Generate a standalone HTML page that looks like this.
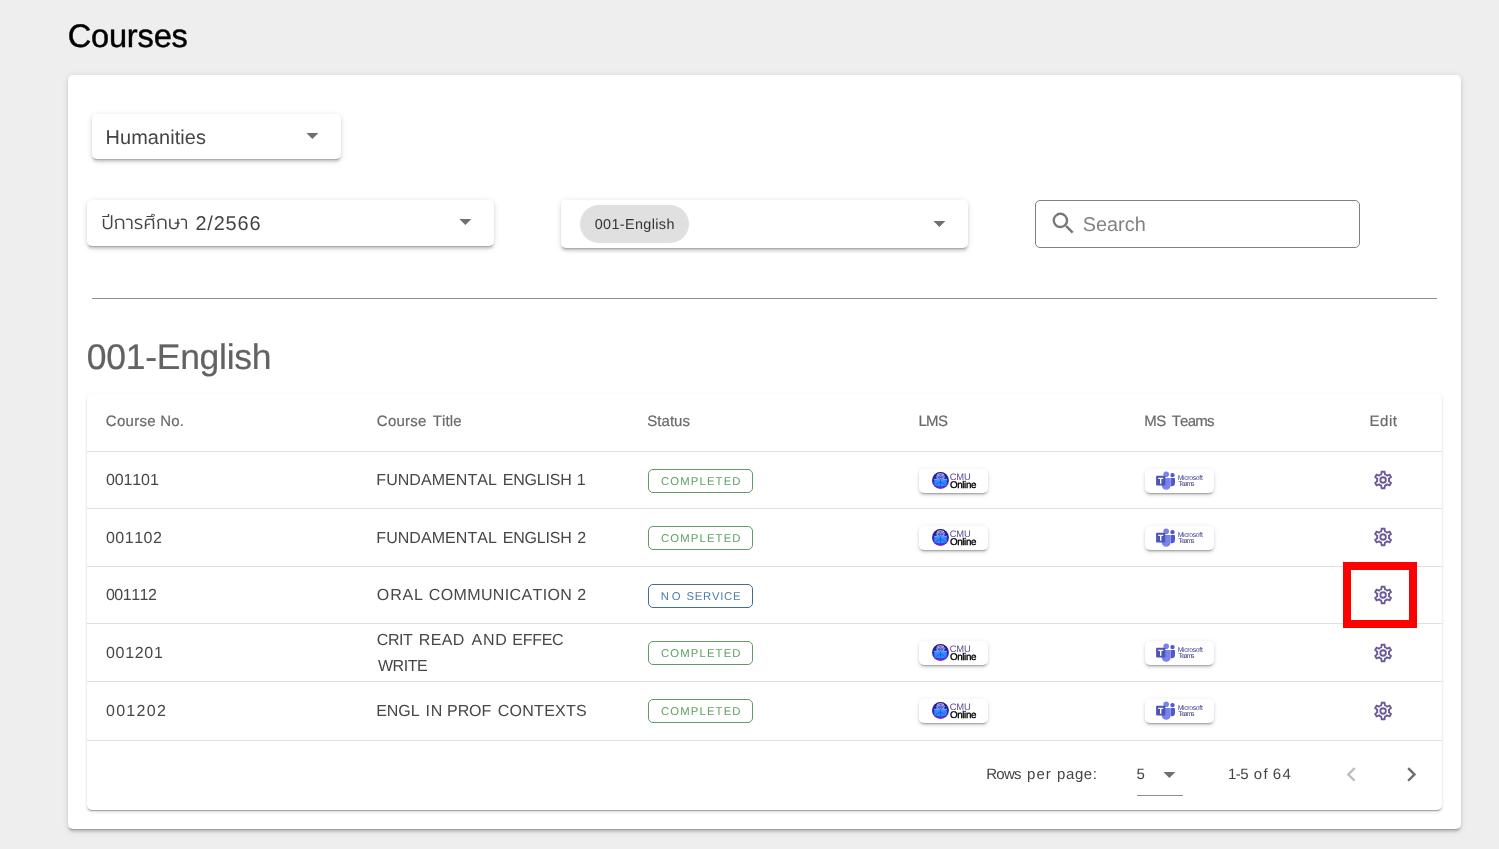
<!DOCTYPE html>
<html lang="en">
<head>
<meta charset="utf-8">
<title>Courses</title>
<style>
*{box-sizing:border-box;margin:0;padding:0}
html,body{width:1499px;height:849px;overflow:hidden;background:#eeeeee}
body{font-family:"Liberation Sans",sans-serif;position:relative}
#app{position:absolute;left:0;top:0;width:1499px;height:849px;will-change:transform}
.b,.t,svg{position:absolute;display:block}
.t{white-space:nowrap;font-kerning:none;font-weight:400;text-rendering:geometricPrecision}
.w span{position:absolute;top:0;display:block}
.card{left:68px;top:75px;width:1393px;height:754px;background:#fff;border-radius:5px;box-shadow:0 3.2px 1.2px -2.4px rgba(0,0,0,.18),0 2.2px 2.4px 0 rgba(0,0,0,.13),0 1.2px 6px 0 rgba(0,0,0,.12)}
.sel{background:#fff;border-radius:5px;box-shadow:0 3.2px 1.2px -2.4px rgba(0,0,0,.18),0 2.2px 2.4px 0 rgba(0,0,0,.13),0 1.2px 6px 0 rgba(0,0,0,.12)}
.thai{font-family:"Liberation Sans","Prompt","Noto Sans Thai","Sarabun","Kanit","IBM Plex Sans Thai",sans-serif;font-weight:300}
.chip{background:#e0e0e0;border-radius:19.2px}
.search{border:1px solid #808080;border-radius:5px;background:#fff}
.tbl{left:87px;top:394px;width:1355px;height:416px;background:#fff;border-radius:5px;box-shadow:0 1.9px 1.2px -1.2px rgba(0,0,0,.2),0 1px 1.2px 0 rgba(0,0,0,.13),0 1.2px 3.6px 0 rgba(0,0,0,.12)}
.ln{left:87px;width:1355px;height:1px;background:#e0e0e0}
.st{width:105px;height:24px;border:1px solid #639a67;border-radius:5px}
.st.ns{border-color:#3f6d96}
.btn{width:69px;height:24px;background:#fff;border-radius:5px;box-shadow:0 2.7px 1.2px -2.1px rgba(0,0,0,.2),0 2px 2.4px 0 rgba(0,0,0,.12),0 1.2px 5.5px 0 rgba(0,0,0,.11)}
.red{left:1343px;top:562px;width:74px;height:66px;border:8px solid #ff0000}
</style>
</head>
<body>
<main id="app">
<svg width="0" height="0" style="left:-10px;top:-10px" aria-hidden="true"><defs><linearGradient id="cg" x1="0" y1="0" x2="0" y2="1"><stop offset="0" stop-color="#15157a"/><stop offset=".45" stop-color="#2a22b4"/><stop offset="1" stop-color="#6a2cd2"/></linearGradient></defs></svg>
<h1 class="t " style="left:67.64px;top:15px;font-size:32.6px;line-height:42px;letter-spacing:-0.176px;color:#000;-webkit-text-stroke:.45px #000;">Courses</h1>
<section aria-label="Courses">
<div class="b card"></div>
<div class="filters">
<div class="b sel" style="left:92px;top:114px;width:249px;height:45px"></div>
<div class="t " style="left:105.57px;top:125px;font-size:19.9px;line-height:26px;letter-spacing:0.101px;color:#444;">Humanities</div>
<svg style="left:297.60px;top:120.50px" width="28.8" height="28.8" viewBox="0 0 24 24"><path fill="#707070" d="M7,10L12,15L17,10H7Z"/></svg>
<div class="b sel" style="left:87px;top:200px;width:407px;height:46px"></div>
<div class="t thai" style="left:101.4px;top:208px;width:170px;height:32px;font-size:19.2px;line-height:32px;color:#444">ปีการศึกษา <span style="position:absolute;left:94px;top:0;font-size:19.9px;letter-spacing:.85px">2/2566</span></div>
<svg style="left:451.00px;top:206.50px" width="28.8" height="28.8" viewBox="0 0 24 24"><path fill="#707070" d="M7,10L12,15L17,10H7Z"/></svg>
<div class="b sel" style="left:561px;top:200px;width:407px;height:48px"></div>
<div class="b chip" style="left:580px;top:205px;width:109px;height:38px"></div>
<div class="t " style="left:594.74px;top:216px;font-size:14.4px;line-height:19px;letter-spacing:0.365px;color:#333;">001-English</div>
<svg style="left:925.00px;top:208.60px" width="28.8" height="28.8" viewBox="0 0 24 24"><path fill="#707070" d="M7,10L12,15L17,10H7Z"/></svg>
<div class="b search" style="left:1035px;top:200px;width:325px;height:48px"></div>
<svg style="left:1049.2px;top:209.0px" width="28.8" height="28.8" viewBox="0 0 24 24"><path fill="#777" d="M9.5,3A6.5,6.5 0 0,1 16,9.5C16,11.11 15.41,12.59 14.44,13.73L14.71,14H15.5L20.5,19L19,20.5L14,15.5V14.71L13.73,14.44C12.59,15.41 11.11,16 9.5,16A6.5,6.5 0 0,1 3,9.5A6.5,6.5 0 0,1 9.5,3M9.5,5C7,5 5,7 5,9.5C5,12 7,14 9.5,14C12,14 14,12 14,9.5C14,7 12,5 9.5,5Z"/></svg>
<div class="t " style="left:1082.70px;top:212px;font-size:19.9px;line-height:26px;letter-spacing:0.009px;color:#828282;">Search</div>
</div>
<div class="b" role="separator" style="left:92px;top:298px;width:1345px;height:1px;background:#8f8f8f"></div>
<h2 class="t " style="left:86.81px;top:334px;font-size:35.5px;line-height:46px;letter-spacing:-0.279px;color:#626262;-webkit-text-stroke:.2px #626262;">001-English</h2>
<div role="table" aria-label="001-English">
<div class="b tbl"></div>
<div role="row">
<div class="t w " style="left:106.60px;top:412px;width:80.0px;height:20px;font-size:15px;line-height:20px;color:#6a6a6a;-webkit-text-stroke:.2px #6a6a6a;"><span style="left:-0.76px;letter-spacing:0.295px">Course</span> <span style="left:53.77px;letter-spacing:0.129px">No.</span></div>
<div class="t w " style="left:377.60px;top:412px;width:87.4px;height:20px;font-size:15px;line-height:20px;color:#6a6a6a;-webkit-text-stroke:.2px #6a6a6a;"><span style="left:-0.76px;letter-spacing:0.215px">Course</span> <span style="left:55.06px;letter-spacing:0.167px">Title</span></div>
<div class="t w " style="left:648.00px;top:412px;width:45.4px;height:20px;font-size:15px;line-height:20px;color:#6a6a6a;-webkit-text-stroke:.2px #6a6a6a;"><span style="left:-0.68px;letter-spacing:0.020px">Status</span></div>
<div class="t w " style="left:919.60px;top:412px;width:31.6px;height:20px;font-size:15px;line-height:20px;color:#6a6a6a;-webkit-text-stroke:.2px #6a6a6a;"><span style="left:-1.23px;letter-spacing:-0.662px">LMS</span></div>
<div class="t w " style="left:1145.40px;top:412px;width:72.5px;height:20px;font-size:15px;line-height:20px;color:#6a6a6a;-webkit-text-stroke:.2px #6a6a6a;"><span style="left:-1.23px;letter-spacing:-0.381px">MS</span> <span style="left:26.36px;letter-spacing:-0.791px">Teams</span></div>
<div class="t w " style="left:1370.70px;top:412px;width:30.1px;height:20px;font-size:15px;line-height:20px;color:#6a6a6a;-webkit-text-stroke:.2px #6a6a6a;"><span style="left:-1.23px;letter-spacing:0.531px">Edit</span></div>
</div>
<div class="b ln" style="top:451px"></div>
<div class="b ln" style="top:508px"></div>
<div class="b ln" style="top:566px"></div>
<div class="b ln" style="top:623px"></div>
<div class="b ln" style="top:681px"></div>
<div class="b ln" style="top:740px"></div>
<div role="row">
<div class="t " style="left:105.97px;top:470px;font-size:16px;line-height:21px;letter-spacing:-0.117px;color:#474747;">001101</div>
<div class="t w " style="left:377.60px;top:470px;width:210.8px;height:21px;font-size:16px;line-height:21px;color:#474747;"><span style="left:-1.31px;letter-spacing:0.064px">FUNDAMENTAL</span> <span style="left:125.09px;letter-spacing:-0.171px">ENGLISH</span> <span style="left:199.18px;letter-spacing:0.000px">1</span></div>
<div class="b st" style="left:648px;top:469px"></div>
<div class="t " style="left:661.03px;top:475px;font-size:11.3px;line-height:15px;letter-spacing:1.149px;color:#5fa263;">COMPLETED</div>
<div class="b btn" style="left:919px;top:469px"></div>
<svg style="left:932px;top:471.8px" width="17" height="17" viewBox="0 0 17 17"><circle cx="8.5" cy="8.5" r="8.5" fill="url(#cg)"/><path d="M5.4 2.3 Q8.5 1 11.6 2.3" fill="none" stroke="#eef0ff" stroke-width=".9" stroke-linecap="round"/><path d="M4.2 4.1 Q8.5 1.9 12.8 4.1" fill="none" stroke="#a9adff" stroke-width="1" stroke-linecap="round"/><path d="M4.4 4.6 Q8.5 3.6 12.6 4.6 L12.4 6.9 L8.5 7.6 L4.6 6.9 Z" fill="#8f95f5"/><circle cx="7.3" cy="5.5" r=".75" fill="none" stroke="#1c1c84" stroke-width=".55"/><circle cx="9.7" cy="5.5" r=".75" fill="none" stroke="#1c1c84" stroke-width=".55"/><path d="M2.2 6.8 L8.5 7.7 L14.8 6.8 L14.6 13.6 L8.5 14.6 L2.4 13.6 Z" fill="#2b8dff"/><path d="M2.2 6.8 L8.5 7.7 L14.8 6.8 L14.8 7.7 L8.5 8.6 L2.2 7.7 Z" fill="#6fb4ff"/><path d="M8.5 7.7 V14.6 M3.4 13 L8.5 9.6 L13.6 13" stroke="#1a52e6" stroke-width=".8" fill="none"/></svg>
<div class="t " style="left:949.72px;top:471px;font-size:9.4px;line-height:12px;letter-spacing:-0.202px;color:#5a4a92;">CMU</div>
<div class="t " style="left:949.94px;top:480px;font-size:9.8px;line-height:12px;letter-spacing:-0.366px;color:#000;-webkit-text-stroke:.35px #000;">Online</div>
<div class="b btn" style="left:1144.5px;top:469px"></div>
<svg style="left:1156px;top:471.0px" width="19" height="19" viewBox="0 0 19 19"><circle cx="16.5" cy="4.1" r="2.2" fill="#4f58c4"/><path d="M14.7 6.9h3.6a.7.7 0 0 1 .7.7v4.2a3.5 3.5 0 0 1-3.5 3.5h-.8z" fill="#5059c9"/><circle cx="10.2" cy="3.2" r="2.8" fill="#7b83eb"/><path d="M6.4 7.1h7.6a.7.7 0 0 1 .7.7v6.4a4.5 4.5 0 0 1-4.5 4.5a4.5 4.5 0 0 1-4.5-4.5V7.8a.7.7 0 0 1 .7-.7z" fill="#7b83eb"/><rect x=".1" y="4.8" width="9.2" height="9.7" rx=".8" fill="#4b53bc"/><path d="M2.2 6.7h5v1.4H5.4v4.6H4V8.1H2.2z" fill="#fff"/></svg>
<div class="t " style="left:1177.63px;top:474px;font-size:6.9px;line-height:9px;letter-spacing:-0.346px;color:#3f4296;">Microsoft</div>
<div class="t " style="left:1178.15px;top:480px;font-size:6.9px;line-height:9px;letter-spacing:-1.171px;color:#41447f;">Teams</div>
<svg style="left:1372.20px;top:468.70px" width="22.2" height="22" viewBox="0 0 24 24" preserveAspectRatio="none"><path fill="#695a98" d="M12,8A4,4 0 0,1 16,12A4,4 0 0,1 12,16A4,4 0 0,1 8,12A4,4 0 0,1 12,8M12,10A2,2 0 0,0 10,12A2,2 0 0,0 12,14A2,2 0 0,0 14,12A2,2 0 0,0 12,10M10,22C9.75,22 9.54,21.82 9.5,21.58L9.13,18.93C8.5,18.68 7.96,18.34 7.44,17.94L4.95,18.95C4.73,19.03 4.46,18.95 4.34,18.73L2.34,15.27C2.21,15.05 2.27,14.78 2.46,14.63L4.57,12.97L4.5,12L4.57,11L2.46,9.37C2.27,9.22 2.21,8.95 2.34,8.73L4.34,5.27C4.46,5.05 4.73,4.96 4.95,5.05L7.44,6.05C7.96,5.66 8.5,5.32 9.13,5.07L9.5,2.42C9.54,2.18 9.75,2 10,2H14C14.25,2 14.46,2.18 14.5,2.42L14.87,5.07C15.5,5.32 16.04,5.66 16.56,6.05L19.05,5.05C19.27,4.96 19.54,5.05 19.66,5.27L21.66,8.73C21.79,8.95 21.73,9.22 21.54,9.37L19.43,11L19.5,12L19.43,13L21.54,14.63C21.73,14.78 21.79,15.05 21.66,15.27L19.66,18.73C19.54,18.95 19.27,19.04 19.05,18.95L16.56,17.95C16.04,18.34 15.5,18.68 14.87,18.93L14.5,21.58C14.46,21.82 14.25,22 14,22H10M11.25,4L10.88,6.61C9.68,6.86 8.62,7.5 7.85,8.39L5.44,7.35L4.69,8.65L6.8,10.2C6.4,11.37 6.4,12.64 6.8,13.8L4.68,15.36L5.43,16.66L7.86,15.62C8.63,16.5 9.68,17.14 10.87,17.38L11.24,20H12.76L13.13,17.39C14.32,17.14 15.37,16.5 16.14,15.62L18.57,16.66L19.32,15.36L17.2,13.81C17.6,12.64 17.6,11.37 17.2,10.2L19.31,8.65L18.56,7.35L16.15,8.39C15.38,7.5 14.32,6.86 13.12,6.62L12.75,4H11.25Z"/></svg>
</div>
<div role="row">
<div class="t " style="left:105.97px;top:528px;font-size:16px;line-height:21px;letter-spacing:0.488px;color:#474747;">001102</div>
<div class="t w " style="left:377.60px;top:528px;width:213.4px;height:21px;font-size:16px;line-height:21px;color:#474747;"><span style="left:-1.31px;letter-spacing:0.064px">FUNDAMENTAL</span> <span style="left:125.09px;letter-spacing:-0.171px">ENGLISH</span> <span style="left:199.60px;letter-spacing:0.000px">2</span></div>
<div class="b st" style="left:648px;top:526px"></div>
<div class="t " style="left:661.03px;top:532px;font-size:11.3px;line-height:15px;letter-spacing:1.149px;color:#5fa263;">COMPLETED</div>
<div class="b btn" style="left:919px;top:526px"></div>
<svg style="left:932px;top:528.8px" width="17" height="17" viewBox="0 0 17 17"><circle cx="8.5" cy="8.5" r="8.5" fill="url(#cg)"/><path d="M5.4 2.3 Q8.5 1 11.6 2.3" fill="none" stroke="#eef0ff" stroke-width=".9" stroke-linecap="round"/><path d="M4.2 4.1 Q8.5 1.9 12.8 4.1" fill="none" stroke="#a9adff" stroke-width="1" stroke-linecap="round"/><path d="M4.4 4.6 Q8.5 3.6 12.6 4.6 L12.4 6.9 L8.5 7.6 L4.6 6.9 Z" fill="#8f95f5"/><circle cx="7.3" cy="5.5" r=".75" fill="none" stroke="#1c1c84" stroke-width=".55"/><circle cx="9.7" cy="5.5" r=".75" fill="none" stroke="#1c1c84" stroke-width=".55"/><path d="M2.2 6.8 L8.5 7.7 L14.8 6.8 L14.6 13.6 L8.5 14.6 L2.4 13.6 Z" fill="#2b8dff"/><path d="M2.2 6.8 L8.5 7.7 L14.8 6.8 L14.8 7.7 L8.5 8.6 L2.2 7.7 Z" fill="#6fb4ff"/><path d="M8.5 7.7 V14.6 M3.4 13 L8.5 9.6 L13.6 13" stroke="#1a52e6" stroke-width=".8" fill="none"/></svg>
<div class="t " style="left:949.72px;top:528px;font-size:9.4px;line-height:12px;letter-spacing:-0.202px;color:#5a4a92;">CMU</div>
<div class="t " style="left:949.94px;top:537px;font-size:9.8px;line-height:12px;letter-spacing:-0.366px;color:#000;-webkit-text-stroke:.35px #000;">Online</div>
<div class="b btn" style="left:1144.5px;top:526px"></div>
<svg style="left:1156px;top:528.0px" width="19" height="19" viewBox="0 0 19 19"><circle cx="16.5" cy="4.1" r="2.2" fill="#4f58c4"/><path d="M14.7 6.9h3.6a.7.7 0 0 1 .7.7v4.2a3.5 3.5 0 0 1-3.5 3.5h-.8z" fill="#5059c9"/><circle cx="10.2" cy="3.2" r="2.8" fill="#7b83eb"/><path d="M6.4 7.1h7.6a.7.7 0 0 1 .7.7v6.4a4.5 4.5 0 0 1-4.5 4.5a4.5 4.5 0 0 1-4.5-4.5V7.8a.7.7 0 0 1 .7-.7z" fill="#7b83eb"/><rect x=".1" y="4.8" width="9.2" height="9.7" rx=".8" fill="#4b53bc"/><path d="M2.2 6.7h5v1.4H5.4v4.6H4V8.1H2.2z" fill="#fff"/></svg>
<div class="t " style="left:1177.63px;top:531px;font-size:6.9px;line-height:9px;letter-spacing:-0.346px;color:#3f4296;">Microsoft</div>
<div class="t " style="left:1178.15px;top:537px;font-size:6.9px;line-height:9px;letter-spacing:-1.171px;color:#41447f;">Teams</div>
<svg style="left:1372.20px;top:525.90px" width="22.2" height="22" viewBox="0 0 24 24" preserveAspectRatio="none"><path fill="#695a98" d="M12,8A4,4 0 0,1 16,12A4,4 0 0,1 12,16A4,4 0 0,1 8,12A4,4 0 0,1 12,8M12,10A2,2 0 0,0 10,12A2,2 0 0,0 12,14A2,2 0 0,0 14,12A2,2 0 0,0 12,10M10,22C9.75,22 9.54,21.82 9.5,21.58L9.13,18.93C8.5,18.68 7.96,18.34 7.44,17.94L4.95,18.95C4.73,19.03 4.46,18.95 4.34,18.73L2.34,15.27C2.21,15.05 2.27,14.78 2.46,14.63L4.57,12.97L4.5,12L4.57,11L2.46,9.37C2.27,9.22 2.21,8.95 2.34,8.73L4.34,5.27C4.46,5.05 4.73,4.96 4.95,5.05L7.44,6.05C7.96,5.66 8.5,5.32 9.13,5.07L9.5,2.42C9.54,2.18 9.75,2 10,2H14C14.25,2 14.46,2.18 14.5,2.42L14.87,5.07C15.5,5.32 16.04,5.66 16.56,6.05L19.05,5.05C19.27,4.96 19.54,5.05 19.66,5.27L21.66,8.73C21.79,8.95 21.73,9.22 21.54,9.37L19.43,11L19.5,12L19.43,13L21.54,14.63C21.73,14.78 21.79,15.05 21.66,15.27L19.66,18.73C19.54,18.95 19.27,19.04 19.05,18.95L16.56,17.95C16.04,18.34 15.5,18.68 14.87,18.93L14.5,21.58C14.46,21.82 14.25,22 14,22H10M11.25,4L10.88,6.61C9.68,6.86 8.62,7.5 7.85,8.39L5.44,7.35L4.69,8.65L6.8,10.2C6.4,11.37 6.4,12.64 6.8,13.8L4.68,15.36L5.43,16.66L7.86,15.62C8.63,16.5 9.68,17.14 10.87,17.38L11.24,20H12.76L13.13,17.39C14.32,17.14 15.37,16.5 16.14,15.62L18.57,16.66L19.32,15.36L17.2,13.81C17.6,12.64 17.6,11.37 17.2,10.2L19.31,8.65L18.56,7.35L16.15,8.39C15.38,7.5 14.32,6.86 13.12,6.62L12.75,4H11.25Z"/></svg>
</div>
<div role="row">
<div class="t " style="left:105.97px;top:585px;font-size:16px;line-height:21px;letter-spacing:-0.512px;color:#474747;">001112</div>
<div class="t w " style="left:377.60px;top:585px;width:213.4px;height:21px;font-size:16px;line-height:21px;color:#474747;"><span style="left:-0.76px;letter-spacing:0.840px">ORAL</span> <span style="left:51.19px;letter-spacing:0.372px">COMMUNICATION</span> <span style="left:199.60px;letter-spacing:0.000px">2</span></div>
<div class="b st ns" style="left:648px;top:584px"></div>
<div class="t w " style="left:661.60px;top:590px;width:82.4px;height:15px;font-size:11.3px;line-height:15px;color:#4d7fab;"><span style="left:-0.93px;letter-spacing:2.918px">NO</span> <span style="left:24.89px;letter-spacing:0.732px">SERVICE</span></div>
<svg style="left:1372.20px;top:583.70px" width="22.2" height="22" viewBox="0 0 24 24" preserveAspectRatio="none"><path fill="#695a98" d="M12,8A4,4 0 0,1 16,12A4,4 0 0,1 12,16A4,4 0 0,1 8,12A4,4 0 0,1 12,8M12,10A2,2 0 0,0 10,12A2,2 0 0,0 12,14A2,2 0 0,0 14,12A2,2 0 0,0 12,10M10,22C9.75,22 9.54,21.82 9.5,21.58L9.13,18.93C8.5,18.68 7.96,18.34 7.44,17.94L4.95,18.95C4.73,19.03 4.46,18.95 4.34,18.73L2.34,15.27C2.21,15.05 2.27,14.78 2.46,14.63L4.57,12.97L4.5,12L4.57,11L2.46,9.37C2.27,9.22 2.21,8.95 2.34,8.73L4.34,5.27C4.46,5.05 4.73,4.96 4.95,5.05L7.44,6.05C7.96,5.66 8.5,5.32 9.13,5.07L9.5,2.42C9.54,2.18 9.75,2 10,2H14C14.25,2 14.46,2.18 14.5,2.42L14.87,5.07C15.5,5.32 16.04,5.66 16.56,6.05L19.05,5.05C19.27,4.96 19.54,5.05 19.66,5.27L21.66,8.73C21.79,8.95 21.73,9.22 21.54,9.37L19.43,11L19.5,12L19.43,13L21.54,14.63C21.73,14.78 21.79,15.05 21.66,15.27L19.66,18.73C19.54,18.95 19.27,19.04 19.05,18.95L16.56,17.95C16.04,18.34 15.5,18.68 14.87,18.93L14.5,21.58C14.46,21.82 14.25,22 14,22H10M11.25,4L10.88,6.61C9.68,6.86 8.62,7.5 7.85,8.39L5.44,7.35L4.69,8.65L6.8,10.2C6.4,11.37 6.4,12.64 6.8,13.8L4.68,15.36L5.43,16.66L7.86,15.62C8.63,16.5 9.68,17.14 10.87,17.38L11.24,20H12.76L13.13,17.39C14.32,17.14 15.37,16.5 16.14,15.62L18.57,16.66L19.32,15.36L17.2,13.81C17.6,12.64 17.6,11.37 17.2,10.2L19.31,8.65L18.56,7.35L16.15,8.39C15.38,7.5 14.32,6.86 13.12,6.62L12.75,4H11.25Z"/></svg>
</div>
<div role="row">
<div class="t " style="left:105.97px;top:643px;font-size:16px;line-height:21px;letter-spacing:0.683px;color:#474747;">001201</div>
<div class="t w " style="left:377.60px;top:630px;width:189.4px;height:21px;font-size:16px;line-height:21px;color:#474747;"><span style="left:-0.81px;letter-spacing:-0.449px">CRIT</span> <span style="left:41.09px;letter-spacing:0.408px">READ</span> <span style="left:93.97px;letter-spacing:0.708px">AND</span> <span style="left:134.69px;letter-spacing:-0.281px">EFFEC</span></div>
<div class="t w " style="left:378.00px;top:656px;width:53.0px;height:21px;font-size:16px;line-height:21px;color:#474747;"><span style="left:-0.07px;letter-spacing:-0.447px">WRITE</span></div>
<div class="b st" style="left:648px;top:641px"></div>
<div class="t " style="left:661.03px;top:647px;font-size:11.3px;line-height:15px;letter-spacing:1.149px;color:#5fa263;">COMPLETED</div>
<div class="b btn" style="left:919px;top:641px"></div>
<svg style="left:932px;top:643.8px" width="17" height="17" viewBox="0 0 17 17"><circle cx="8.5" cy="8.5" r="8.5" fill="url(#cg)"/><path d="M5.4 2.3 Q8.5 1 11.6 2.3" fill="none" stroke="#eef0ff" stroke-width=".9" stroke-linecap="round"/><path d="M4.2 4.1 Q8.5 1.9 12.8 4.1" fill="none" stroke="#a9adff" stroke-width="1" stroke-linecap="round"/><path d="M4.4 4.6 Q8.5 3.6 12.6 4.6 L12.4 6.9 L8.5 7.6 L4.6 6.9 Z" fill="#8f95f5"/><circle cx="7.3" cy="5.5" r=".75" fill="none" stroke="#1c1c84" stroke-width=".55"/><circle cx="9.7" cy="5.5" r=".75" fill="none" stroke="#1c1c84" stroke-width=".55"/><path d="M2.2 6.8 L8.5 7.7 L14.8 6.8 L14.6 13.6 L8.5 14.6 L2.4 13.6 Z" fill="#2b8dff"/><path d="M2.2 6.8 L8.5 7.7 L14.8 6.8 L14.8 7.7 L8.5 8.6 L2.2 7.7 Z" fill="#6fb4ff"/><path d="M8.5 7.7 V14.6 M3.4 13 L8.5 9.6 L13.6 13" stroke="#1a52e6" stroke-width=".8" fill="none"/></svg>
<div class="t " style="left:949.72px;top:643px;font-size:9.4px;line-height:12px;letter-spacing:-0.202px;color:#5a4a92;">CMU</div>
<div class="t " style="left:949.94px;top:652px;font-size:9.8px;line-height:12px;letter-spacing:-0.366px;color:#000;-webkit-text-stroke:.35px #000;">Online</div>
<div class="b btn" style="left:1144.5px;top:641px"></div>
<svg style="left:1156px;top:643.0px" width="19" height="19" viewBox="0 0 19 19"><circle cx="16.5" cy="4.1" r="2.2" fill="#4f58c4"/><path d="M14.7 6.9h3.6a.7.7 0 0 1 .7.7v4.2a3.5 3.5 0 0 1-3.5 3.5h-.8z" fill="#5059c9"/><circle cx="10.2" cy="3.2" r="2.8" fill="#7b83eb"/><path d="M6.4 7.1h7.6a.7.7 0 0 1 .7.7v6.4a4.5 4.5 0 0 1-4.5 4.5a4.5 4.5 0 0 1-4.5-4.5V7.8a.7.7 0 0 1 .7-.7z" fill="#7b83eb"/><rect x=".1" y="4.8" width="9.2" height="9.7" rx=".8" fill="#4b53bc"/><path d="M2.2 6.7h5v1.4H5.4v4.6H4V8.1H2.2z" fill="#fff"/></svg>
<div class="t " style="left:1177.63px;top:646px;font-size:6.9px;line-height:9px;letter-spacing:-0.346px;color:#3f4296;">Microsoft</div>
<div class="t " style="left:1178.15px;top:652px;font-size:6.9px;line-height:9px;letter-spacing:-1.171px;color:#41447f;">Teams</div>
<svg style="left:1372.20px;top:641.80px" width="22.2" height="22" viewBox="0 0 24 24" preserveAspectRatio="none"><path fill="#695a98" d="M12,8A4,4 0 0,1 16,12A4,4 0 0,1 12,16A4,4 0 0,1 8,12A4,4 0 0,1 12,8M12,10A2,2 0 0,0 10,12A2,2 0 0,0 12,14A2,2 0 0,0 14,12A2,2 0 0,0 12,10M10,22C9.75,22 9.54,21.82 9.5,21.58L9.13,18.93C8.5,18.68 7.96,18.34 7.44,17.94L4.95,18.95C4.73,19.03 4.46,18.95 4.34,18.73L2.34,15.27C2.21,15.05 2.27,14.78 2.46,14.63L4.57,12.97L4.5,12L4.57,11L2.46,9.37C2.27,9.22 2.21,8.95 2.34,8.73L4.34,5.27C4.46,5.05 4.73,4.96 4.95,5.05L7.44,6.05C7.96,5.66 8.5,5.32 9.13,5.07L9.5,2.42C9.54,2.18 9.75,2 10,2H14C14.25,2 14.46,2.18 14.5,2.42L14.87,5.07C15.5,5.32 16.04,5.66 16.56,6.05L19.05,5.05C19.27,4.96 19.54,5.05 19.66,5.27L21.66,8.73C21.79,8.95 21.73,9.22 21.54,9.37L19.43,11L19.5,12L19.43,13L21.54,14.63C21.73,14.78 21.79,15.05 21.66,15.27L19.66,18.73C19.54,18.95 19.27,19.04 19.05,18.95L16.56,17.95C16.04,18.34 15.5,18.68 14.87,18.93L14.5,21.58C14.46,21.82 14.25,22 14,22H10M11.25,4L10.88,6.61C9.68,6.86 8.62,7.5 7.85,8.39L5.44,7.35L4.69,8.65L6.8,10.2C6.4,11.37 6.4,12.64 6.8,13.8L4.68,15.36L5.43,16.66L7.86,15.62C8.63,16.5 9.68,17.14 10.87,17.38L11.24,20H12.76L13.13,17.39C14.32,17.14 15.37,16.5 16.14,15.62L18.57,16.66L19.32,15.36L17.2,13.81C17.6,12.64 17.6,11.37 17.2,10.2L19.31,8.65L18.56,7.35L16.15,8.39C15.38,7.5 14.32,6.86 13.12,6.62L12.75,4H11.25Z"/></svg>
</div>
<div role="row">
<div class="t " style="left:105.97px;top:701px;font-size:16px;line-height:21px;letter-spacing:1.288px;color:#474747;">001202</div>
<div class="t w " style="left:377.60px;top:701px;width:212.4px;height:21px;font-size:16px;line-height:21px;color:#474747;"><span style="left:-1.31px;letter-spacing:-0.109px">ENGL</span> <span style="left:47.92px;letter-spacing:0.781px">IN</span> <span style="left:69.49px;letter-spacing:-0.097px">PROF</span> <span style="left:120.19px;letter-spacing:0.261px">CONTEXTS</span></div>
<div class="b st" style="left:648px;top:699px"></div>
<div class="t " style="left:661.03px;top:705px;font-size:11.3px;line-height:15px;letter-spacing:1.149px;color:#5fa263;">COMPLETED</div>
<div class="b btn" style="left:919px;top:699px"></div>
<svg style="left:932px;top:701.8px" width="17" height="17" viewBox="0 0 17 17"><circle cx="8.5" cy="8.5" r="8.5" fill="url(#cg)"/><path d="M5.4 2.3 Q8.5 1 11.6 2.3" fill="none" stroke="#eef0ff" stroke-width=".9" stroke-linecap="round"/><path d="M4.2 4.1 Q8.5 1.9 12.8 4.1" fill="none" stroke="#a9adff" stroke-width="1" stroke-linecap="round"/><path d="M4.4 4.6 Q8.5 3.6 12.6 4.6 L12.4 6.9 L8.5 7.6 L4.6 6.9 Z" fill="#8f95f5"/><circle cx="7.3" cy="5.5" r=".75" fill="none" stroke="#1c1c84" stroke-width=".55"/><circle cx="9.7" cy="5.5" r=".75" fill="none" stroke="#1c1c84" stroke-width=".55"/><path d="M2.2 6.8 L8.5 7.7 L14.8 6.8 L14.6 13.6 L8.5 14.6 L2.4 13.6 Z" fill="#2b8dff"/><path d="M2.2 6.8 L8.5 7.7 L14.8 6.8 L14.8 7.7 L8.5 8.6 L2.2 7.7 Z" fill="#6fb4ff"/><path d="M8.5 7.7 V14.6 M3.4 13 L8.5 9.6 L13.6 13" stroke="#1a52e6" stroke-width=".8" fill="none"/></svg>
<div class="t " style="left:949.72px;top:701px;font-size:9.4px;line-height:12px;letter-spacing:-0.202px;color:#5a4a92;">CMU</div>
<div class="t " style="left:949.94px;top:710px;font-size:9.8px;line-height:12px;letter-spacing:-0.366px;color:#000;-webkit-text-stroke:.35px #000;">Online</div>
<div class="b btn" style="left:1144.5px;top:699px"></div>
<svg style="left:1156px;top:701.0px" width="19" height="19" viewBox="0 0 19 19"><circle cx="16.5" cy="4.1" r="2.2" fill="#4f58c4"/><path d="M14.7 6.9h3.6a.7.7 0 0 1 .7.7v4.2a3.5 3.5 0 0 1-3.5 3.5h-.8z" fill="#5059c9"/><circle cx="10.2" cy="3.2" r="2.8" fill="#7b83eb"/><path d="M6.4 7.1h7.6a.7.7 0 0 1 .7.7v6.4a4.5 4.5 0 0 1-4.5 4.5a4.5 4.5 0 0 1-4.5-4.5V7.8a.7.7 0 0 1 .7-.7z" fill="#7b83eb"/><rect x=".1" y="4.8" width="9.2" height="9.7" rx=".8" fill="#4b53bc"/><path d="M2.2 6.7h5v1.4H5.4v4.6H4V8.1H2.2z" fill="#fff"/></svg>
<div class="t " style="left:1177.63px;top:704px;font-size:6.9px;line-height:9px;letter-spacing:-0.346px;color:#3f4296;">Microsoft</div>
<div class="t " style="left:1178.15px;top:710px;font-size:6.9px;line-height:9px;letter-spacing:-1.171px;color:#41447f;">Teams</div>
<svg style="left:1372.20px;top:699.80px" width="22.2" height="22" viewBox="0 0 24 24" preserveAspectRatio="none"><path fill="#695a98" d="M12,8A4,4 0 0,1 16,12A4,4 0 0,1 12,16A4,4 0 0,1 8,12A4,4 0 0,1 12,8M12,10A2,2 0 0,0 10,12A2,2 0 0,0 12,14A2,2 0 0,0 14,12A2,2 0 0,0 12,10M10,22C9.75,22 9.54,21.82 9.5,21.58L9.13,18.93C8.5,18.68 7.96,18.34 7.44,17.94L4.95,18.95C4.73,19.03 4.46,18.95 4.34,18.73L2.34,15.27C2.21,15.05 2.27,14.78 2.46,14.63L4.57,12.97L4.5,12L4.57,11L2.46,9.37C2.27,9.22 2.21,8.95 2.34,8.73L4.34,5.27C4.46,5.05 4.73,4.96 4.95,5.05L7.44,6.05C7.96,5.66 8.5,5.32 9.13,5.07L9.5,2.42C9.54,2.18 9.75,2 10,2H14C14.25,2 14.46,2.18 14.5,2.42L14.87,5.07C15.5,5.32 16.04,5.66 16.56,6.05L19.05,5.05C19.27,4.96 19.54,5.05 19.66,5.27L21.66,8.73C21.79,8.95 21.73,9.22 21.54,9.37L19.43,11L19.5,12L19.43,13L21.54,14.63C21.73,14.78 21.79,15.05 21.66,15.27L19.66,18.73C19.54,18.95 19.27,19.04 19.05,18.95L16.56,17.95C16.04,18.34 15.5,18.68 14.87,18.93L14.5,21.58C14.46,21.82 14.25,22 14,22H10M11.25,4L10.88,6.61C9.68,6.86 8.62,7.5 7.85,8.39L5.44,7.35L4.69,8.65L6.8,10.2C6.4,11.37 6.4,12.64 6.8,13.8L4.68,15.36L5.43,16.66L7.86,15.62C8.63,16.5 9.68,17.14 10.87,17.38L11.24,20H12.76L13.13,17.39C14.32,17.14 15.37,16.5 16.14,15.62L18.57,16.66L19.32,15.36L17.2,13.81C17.6,12.64 17.6,11.37 17.2,10.2L19.31,8.65L18.56,7.35L16.15,8.39C15.38,7.5 14.32,6.86 13.12,6.62L12.75,4H11.25Z"/></svg>
</div>
<div class="pager">
<div class="t w " style="left:987.40px;top:765px;width:112.2px;height:20px;font-size:15px;line-height:20px;color:#444;"><span style="left:-1.23px;letter-spacing:-0.712px">Rows</span> <span style="left:39.63px;letter-spacing:1.068px">per</span> <span style="left:69.63px;letter-spacing:0.600px">page:</span></div>
<div class="t " style="left:1136.40px;top:765px;font-size:15px;line-height:20px;letter-spacing:0.000px;color:#444;">5</div>
<svg style="left:1154.70px;top:759.70px" width="28.8" height="28.8" viewBox="0 0 24 24"><path fill="#707070" d="M7,10L12,15L17,10H7Z"/></svg>
<div class="b" style="left:1137px;top:795px;width:46px;height:1px;background:#8f8f8f"></div>
<div class="t w " style="left:1229.00px;top:765px;width:65.4px;height:20px;font-size:15px;line-height:20px;color:#444;"><span style="left:-1.14px;letter-spacing:-0.454px">1-5</span> <span style="left:24.77px;letter-spacing:1.298px">of</span> <span style="left:43.64px;letter-spacing:1.517px">64</span></div>
<svg style="left:1337.0px;top:759.7px" width="28.8" height="28.8" viewBox="0 0 24 24"><path fill="#bdbdbd" d="M15.41,16.58L10.83,12L15.41,7.41L14,6L8,12L14,18L15.41,16.58Z"/></svg>
<svg style="left:1396.7px;top:759.7px" width="28.8" height="28.8" viewBox="0 0 24 24"><path fill="#6b6b6b" d="M8.59,16.58L13.17,12L8.59,7.41L10,6L16,12L10,18L8.59,16.58Z"/></svg>
</div>
</div>
<div class="b red"></div>
</section>
</main>
</body>
</html>
